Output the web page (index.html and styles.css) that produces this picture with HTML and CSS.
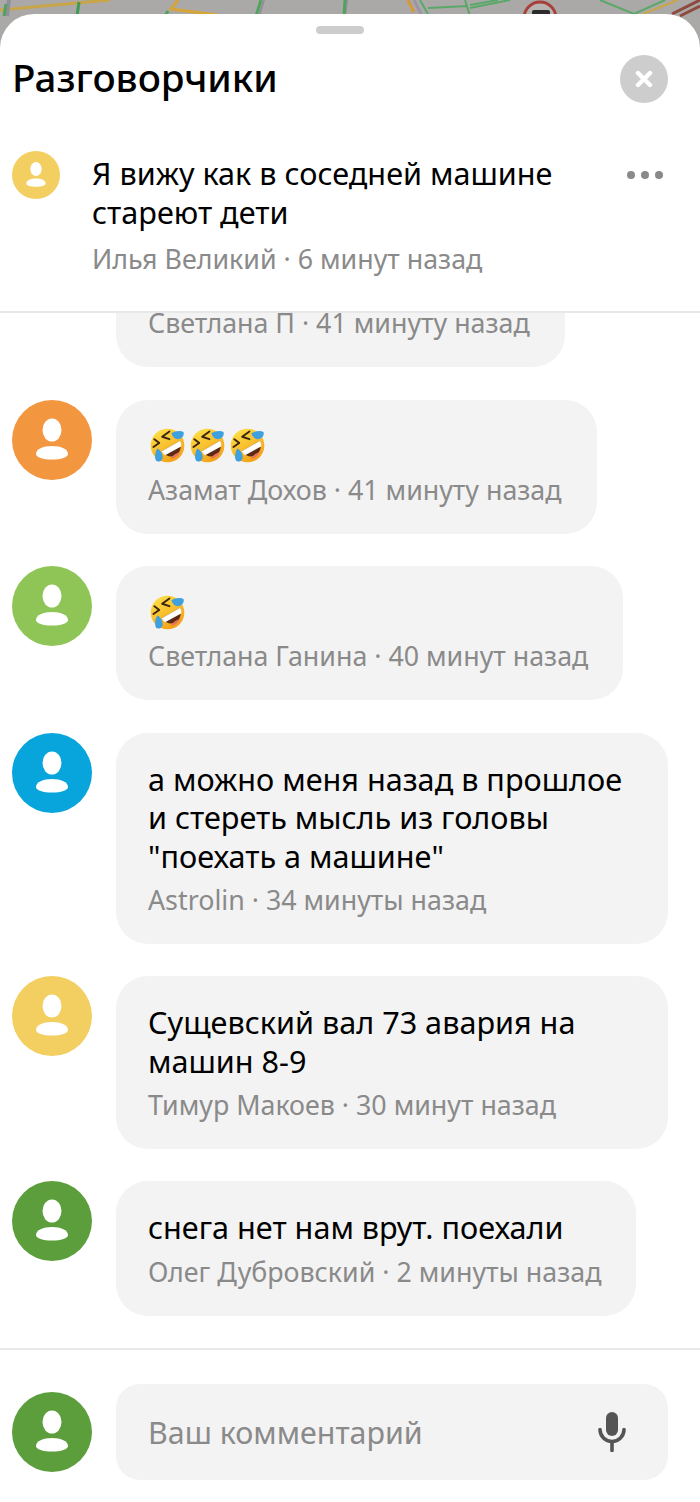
FILE: index.html
```html
<!DOCTYPE html>
<html lang="ru">
<head>
    <meta charset="UTF-8">
    <meta name="viewport" content="width=device-width, initial-scale=1.0">
    <title>Разговорчики</title>
    <link rel="stylesheet" href="styles.css">
</head>
<body>
    <!-- Общие значки -->
    <svg class="defs" width="0" height="0">
        <defs>
            <linearGradient id="faceGrad" x1="0.2" y1="0" x2="0.8" y2="1">
                <stop offset="0" stop-color="#fde047"/>
                <stop offset="1" stop-color="#f39c12"/>
            </linearGradient>
            <symbol id="person" viewBox="0 0 80 80">
                <ellipse cx="40" cy="30" rx="9.5" ry="11.5" fill="#fff"/>
                <path d="M24 54c0-5 7-8 16-8s16 3 16 8c0 3.500-7 5.500-16 5.500s-16-2-16-5.500z" fill="#fff"/>
            </symbol>
            <symbol id="rofl" viewBox="0 0 36 36">
                <circle cx="18" cy="18" r="17.3" fill="url(#faceGrad)"/>
                <path d="M12 24 L31 13 C35 26 22 36 12 24Z" fill="#5c2a14"/>
                <path d="M12 24 L31 13 C32 15 32.300 17 32 19 L15.500 28 C14 27 13 25.500 12 24Z" fill="#fff"/>
                <path d="M21 31.500 C24 27.500 28 25.500 31 24.500 C29 29 25 32 21 31.500Z" fill="#e8735c"/>
                <path d="M20 3.500 L12.500 9 L20 11.500" fill="none" stroke="#3b2412" stroke-width="1.900" stroke-linecap="round" stroke-linejoin="round"/>
                <path d="M4.500 11.500 L9.500 15.500 L3.500 19.500" fill="none" stroke="#3b2412" stroke-width="1.900" stroke-linecap="round" stroke-linejoin="round"/>
                <path d="M22 5.500 C26 3 31 2.500 34.500 4 C35.500 7.500 33 11 28.500 11.500 C25.500 11.500 23 9 22 5.500Z" fill="#3fa0e0"/>
                <path d="M7.500 21 C5 25 4.500 31 6.500 34 C10 35.500 13.500 33 13 29 C12.500 25.500 10.500 22.500 7.500 21Z" fill="#3fa0e0"/>
            </symbol>
        </defs>
    </svg>

    <!-- Кусок карты над шторкой -->
    <svg class="map" viewBox="0 0 700 40" fill="none">
        <path d="M0 10L110 0" stroke="#c9a54a" stroke-width="3"/>
        <path d="M9 0L7 16" stroke="#8f8f9c" stroke-width="4"/>
        <path d="M6 4L4 16" stroke="#4fa35a" stroke-width="3"/>
        <path d="M79 2L77 16" stroke="#3f9a55" stroke-width="3"/>
        <path d="M178 0L171 9L218 15" stroke="#d6a53a" stroke-width="3"/>
        <path d="M168 11L165 16" stroke="#4fa35a" stroke-width="3"/>
        <path d="M264 0L259 16" stroke="#8f8f9c" stroke-width="2"/>
        <path d="M261 0L256 16" stroke="#4fa35a" stroke-width="3"/>
        <path d="M347 0L345 16" stroke="#8f8f9c" stroke-width="2"/>
        <path d="M345 0L344 16" stroke="#4fa35a" stroke-width="3"/>
        <path d="M408 0L414 12" stroke="#d6983a" stroke-width="3"/>
        <path d="M414 0L422 16" stroke="#9a94a6" stroke-width="3"/>
        <path d="M420 0L429 16M428 8L468 6M465 0L470 16M470 8L510 0M470 5L498 0" stroke="#5aa868" stroke-width="2"/>
        <circle cx="540" cy="18" r="16" fill="#b7b5b3" stroke="#a8403a" stroke-width="3"/>
        <rect x="532" y="10" width="18" height="10" rx="2" fill="#2c2c2c"/>
        <path d="M600 0L634 14L665 0" stroke="#5aa868" stroke-width="2"/>
        <path d="M643 14L678 0" stroke="#c9a54a" stroke-width="2"/>
        <path d="M672 14L700 0M680 16L700 6" stroke="#8e4a3e" stroke-width="3"/>
    </svg>

    <div class="sheet">
        <div class="sheet-top">
            <div class="handle"></div>
            <div class="title-row">
                <h1>Разговорчики</h1>
                <div class="close">
                    <svg width="18" height="18" viewBox="0 0 18 18"><path d="M3 3L15 15M15 3L3 15" stroke="#fff" stroke-width="4.400" stroke-linecap="round"/></svg>
                </div>
            </div>
            <div class="topic">
                <svg class="avatar avatar-small yellow"><use href="#person"/></svg>
                <div class="topic-body">
                    <p class="text">Я вижу как в соседней машине стареют дети</p>
                    <p class="meta">Илья Великий · 6 минут назад</p>
                </div>
                <div class="dots"><span></span><span></span><span></span></div>
            </div>
        </div>

        <div class="list">
            <div class="list-inner">
                <div class="comment">
                    <svg class="avatar green"><use href="#person"/></svg>
                    <div class="bubble">
                        <div class="emoji"><svg><use href="#rofl"/></svg></div>
                        <p class="meta">Светлана П · 41 минуту назад</p>
                    </div>
                </div>
                <div class="comment">
                    <svg class="avatar orange"><use href="#person"/></svg>
                    <div class="bubble">
                        <div class="emoji"><svg><use href="#rofl"/></svg><svg><use href="#rofl"/></svg><svg><use href="#rofl"/></svg></div>
                        <p class="meta">Азамат Дохов · 41 минуту назад</p>
                    </div>
                </div>
                <div class="comment">
                    <svg class="avatar green"><use href="#person"/></svg>
                    <div class="bubble">
                        <div class="emoji"><svg><use href="#rofl"/></svg></div>
                        <p class="meta">Светлана Ганина · 40 минут назад</p>
                    </div>
                </div>
                <div class="comment">
                    <svg class="avatar blue"><use href="#person"/></svg>
                    <div class="bubble wide">
                        <p class="text">а можно меня назад в прошлое и стереть мысль из головы "поехать а машине"</p>
                        <p class="meta">Astrolin · 34 минуты назад</p>
                    </div>
                </div>
                <div class="comment">
                    <svg class="avatar yellow"><use href="#person"/></svg>
                    <div class="bubble wide">
                        <p class="text">Сущевский вал 73 авария на машин 8-9</p>
                        <p class="meta">Тимур Макоев · 30 минут назад</p>
                    </div>
                </div>
                <div class="comment">
                    <svg class="avatar dark-green"><use href="#person"/></svg>
                    <div class="bubble">
                        <p class="text">снега нет нам врут. поехали</p>
                        <p class="meta">Олег Дубровский · 2 минуты назад</p>
                    </div>
                </div>
            </div>
        </div>

        <div class="footer">
            <svg class="avatar dark-green"><use href="#person"/></svg>
            <div class="input">
                <span>Ваш комментарий</span>
                <svg width="30" height="40" viewBox="0 0 30 40" fill="none">
                    <rect x="9" y="0" width="12" height="24" rx="6" fill="#555"/>
                    <path d="M3 17.500a12 12 0 0 0 24 0" stroke="#555" stroke-width="3.600" stroke-linecap="round"/>
                    <path d="M15 30V38.500" stroke="#555" stroke-width="3.600" stroke-linecap="round"/>
                </svg>
            </div>
        </div>
    </div>
</body>
</html>
```

FILE: styles.css
```css
* {
    box-sizing: border-box;
}
body {
    margin: 0;
    height: 1502px;
    overflow: hidden;
    position: relative;
    background-color: #aaa9a7;
    font-family: "Noto Sans", sans-serif;
    color: #000;
}
p {
    margin: 0;
}
.defs {
    position: absolute;
}
.map {
    position: absolute;
    top: 0;
    left: 0;
    width: 700px;
    height: 40px;
}
.sheet {
    position: relative;
    margin-top: 14px;
    height: 1488px;
    background-color: #fff;
    border-radius: 34px 34px 0 0;
    display: flex;
    flex-direction: column;
}
.sheet-top {
    padding: 12px 32px 33px 12px;
    border-bottom: 2px solid #e8e8e8;
}
.handle {
    width: 48px;
    height: 8px;
    margin: 0 auto;
    border-radius: 4px;
    background-color: #cdcdcd;
}
.title-row {
    margin-top: 21px;
    height: 48px;
    display: flex;
    justify-content: space-between;
    align-items: center;
}
h1 {
    margin: 0 0 4px;
    font-size: 38.5px;
    font-weight: 500;
}
.close {
    width: 48px;
    height: 48px;
    border-radius: 50%;
    background-color: #cdcdcd;
    display: flex;
    justify-content: center;
    align-items: center;
}
.topic {
    margin-top: 48px;
    display: flex;
    align-items: flex-start;
}
.topic-body {
    flex: 1;
    margin-left: 32px;
    padding-top: 3px;
    max-width: 500px;
}
.topic .meta {
    margin-top: 9px;
}
.dots {
    margin-left: auto;
    margin-top: 20px;
    margin-right: 5px;
    display: flex;
    gap: 6px;
}
.dots span {
    width: 8px;
    height: 8px;
    border-radius: 50%;
    background-color: #8a8a8a;
}
.text {
    font-size: 30.6px;
    line-height: 38.5px;
}
.meta {
    font-size: 26.8px;
    line-height: 38px;
    color: #8a8a8a;
}
.avatar {
    flex: none;
    width: 80px;
    height: 80px;
    border-radius: 50%;
}
.avatar-small {
    width: 48px;
    height: 48px;
}
.yellow { background-color: #f2cf60; }
.orange { background-color: #f2973f; }
.green { background-color: #8fc556; }
.blue { background-color: #07a5dc; }
.dark-green { background-color: #5b9e3b; }

.list {
    flex: 1;
    overflow: hidden;
}
/* прокрутка: первый комментарий уехал под шапку */
.list-inner {
    margin-top: -80px;
    padding: 0 32px 0 12px;
    display: flex;
    flex-direction: column;
    gap: 32.4px;
}
.comment {
    display: flex;
    gap: 24px;
    align-items: flex-start;
}
.bubble {
    padding: 27px 35px 25px 32px;
    border-radius: 32px;
    background-color: #f3f3f3;
}
.bubble .meta {
    margin-top: 5.7px;
}
.bubble.wide {
    width: 552px;
}
.emoji {
    height: 38.5px;
    display: flex;
    gap: 5px;
    align-items: center;
}
.emoji svg {
    width: 35px;
    height: 35px;
}
.emoji svg:first-child {
    margin-left: 2px;
}
.footer {
    flex: none;
    height: 154px;
    padding: 34px 32px 0 12px;
    border-top: 2px solid #e8e8e8;
    display: flex;
    gap: 24px;
    align-items: flex-start;
}
.footer .avatar {
    margin-top: 8px;
}
.input {
    flex: 1;
    height: 96px;
    padding: 0 41px 0 32px;
    border-radius: 24px;
    background-color: #f3f3f3;
    display: flex;
    justify-content: space-between;
    align-items: center;
    font-size: 30.4px;
    color: #8a8a8a;
}
```
